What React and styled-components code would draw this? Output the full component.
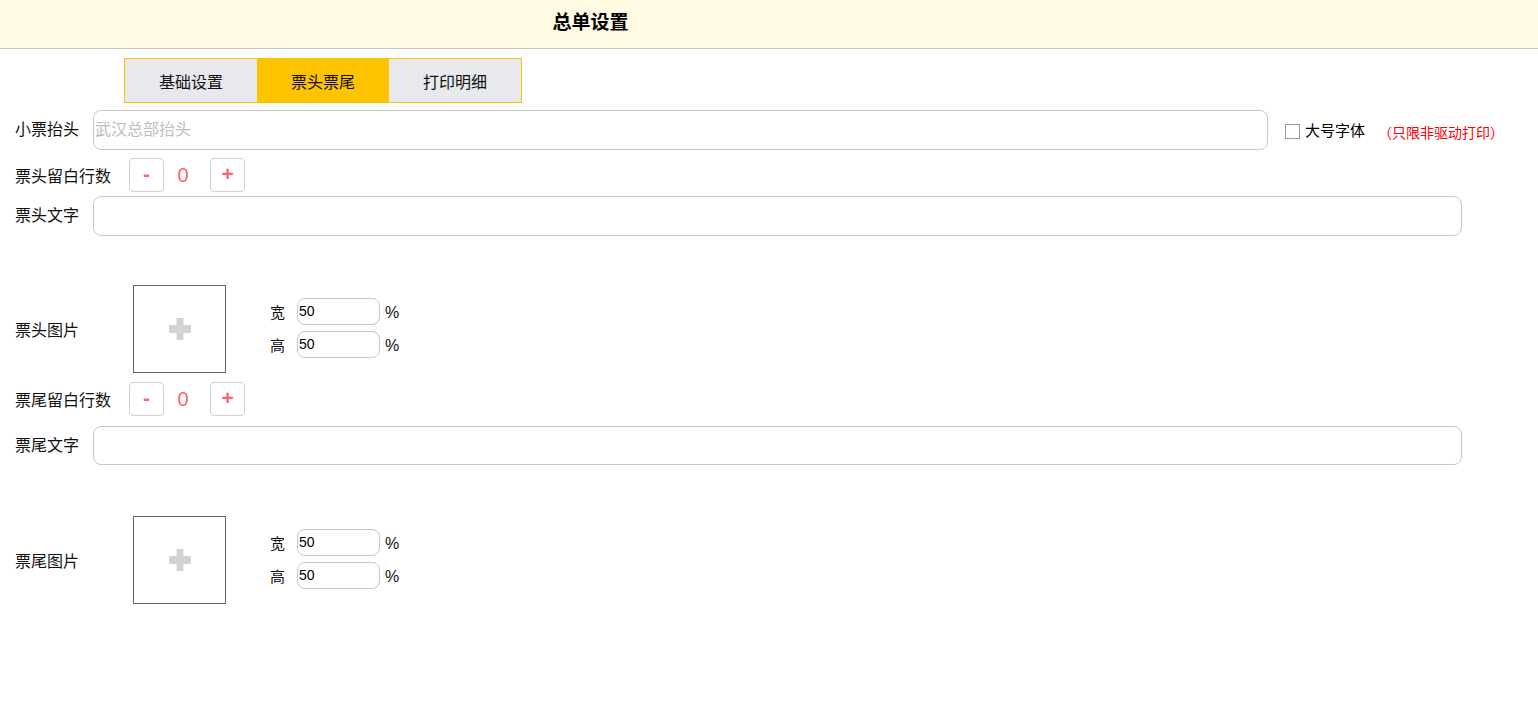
import React, { useState } from "react";
import styled, { createGlobalStyle } from "styled-components";

const GlobalStyle = createGlobalStyle`
	* { box-sizing: border-box; }
	body {
		margin: 0;
		background: #fff;
		font-family: "Liberation Sans", "Noto Sans CJK SC", sans-serif;
		color: #111;
	}
`;

const tabs = ["基础设置", "票头票尾", "打印明细"];

const PlusIcon = () => (
	<svg width="22" height="22" viewBox="0 0 22 22">
		<rect x="7.5" y="0" width="7" height="22" fill="#d3d3d3" />
		<rect x="0" y="7" width="22" height="8" fill="#d3d3d3" />
	</svg>
);

const Stepper = ({ label, top }) => {
	const [count, setCount] = useState(0);
	return (
		<Row top={top} height={34}>
			<StepLabel>{label}</StepLabel>
			<StepBtn onClick={() => setCount(Math.max(0, count - 1))}>-</StepBtn>
			<Count>{count}</Count>
			<StepBtn onClick={() => setCount(count + 1)}>+</StepBtn>
		</Row>
	);
};

const PictureRow = ({ label, top }) => (
	<Row top={top} height={88}>
		<PicLabel>{label}</PicLabel>
		<PicBox>
			<PlusIcon />
		</PicBox>
		<SizeCol>
			<SizeLine>
				<SizeName>宽</SizeName>
				<SizeInput defaultValue="50" />
				<Percent>%</Percent>
			</SizeLine>
			<SizeLine>
				<SizeName>高</SizeName>
				<SizeInput defaultValue="50" />
				<Percent>%</Percent>
			</SizeLine>
		</SizeCol>
	</Row>
);

const App = () => {
	const [active, setActive] = useState(1);
	return (
		<>
			<GlobalStyle />
			<Header>
				<Title>总单设置</Title>
			</Header>
			<Tabs>
				{tabs.map((t, i) => (
					<Tab key={t} isActive={i === active} onClick={() => setActive(i)}>
						{t}
					</Tab>
				))}
			</Tabs>
			<Form>
				<Row top={7} height={40}>
					<Label>小票抬头</Label>
					<TextInput width={1175} placeholder="武汉总部抬头" />
					<CheckWrap>
						<CheckBox type="checkbox" />
						<CheckText>大号字体</CheckText>
					</CheckWrap>
					<Note>（只限非驱动打印）</Note>
				</Row>
				<Stepper label="票头留白行数" top={8} />
				<Row top={4} height={40}>
					<Label>票头文字</Label>
					<TextInput width={1369} />
				</Row>
				<PictureRow label="票头图片" top={49} />
				<Stepper label="票尾留白行数" top={9} />
				<Row top={10} height={39}>
					<Label>票尾文字</Label>
					<TextInput width={1369} />
				</Row>
				<PictureRow label="票尾图片" top={51} />
			</Form>
		</>
	);
};

const Header = styled.div`
	height: 49px;
	background-color: #fffae1;
	border-bottom: 1px solid #c8c8c8;
`;

const Title = styled.h1`
	margin: 0;
	width: 1181px;
	text-align: center;
	font-size: 19px;
	font-weight: bold;
	line-height: 46px;
	color: #000;
`;

const Tabs = styled.div`
	display: flex;
	margin: 9px 0 0 124px;
	width: 398px;
	height: 45px;
	border: 1px solid #f5c200;
`;

const Tab = styled.div`
	flex: 1;
	display: flex;
	align-items: center;
	justify-content: center;
	font-size: 16px;
	color: #111;
	cursor: pointer;
	background-color: ${(p) => (p.isActive ? "#ffc300" : "#e8e9ee")};
`;

const Form = styled.div`
	padding-left: 15px;
`;

const Row = styled.div`
	display: flex;
	align-items: center;
	margin-top: ${(p) => p.top}px;
	height: ${(p) => p.height}px;
`;

const Label = styled.div`
	width: 78px;
	flex-shrink: 0;
	font-size: 16px;
	line-height: 20px;
`;

const TextInput = styled.input`
	width: ${(p) => p.width}px;
	height: 100%;
	border: 1px solid #c8c8c8;
	border-radius: 8px;
	padding: 0 1px;
	font-size: 16px;
	font-family: "Liberation Sans", "Noto Sans CJK SC", sans-serif;
	outline: none;
	&::placeholder {
		color: #bdbdbd;
	}
`;

const CheckWrap = styled.label`
	display: flex;
	align-items: center;
	margin-left: 17px;
	margin-top: 2px;
`;

const CheckBox = styled.input`
	appearance: none;
	margin: 0;
	width: 15px;
	height: 15px;
	border: 1px solid #999;
	background: #fff;
`;

const CheckText = styled.span`
	margin-left: 5px;
	margin-top: -4px;
	font-size: 15px;
	color: #000;
`;

const Note = styled.span`
	margin-left: 13px;
	margin-top: 4px;
	font-size: 14px;
	color: #ff0000;
`;

const StepLabel = styled.div`
	font-size: 16px;
	line-height: 20px;
	margin-top: 3px;
	margin-right: 18px;
`;

const StepBtn = styled.button`
	width: 35px;
	height: 34px;
	border: 1px solid #cfcfcf;
	border-radius: 4px;
	background: #fff;
	color: #ff6666;
	font-size: 21px;
	font-weight: bold;
	font-family: "Liberation Sans", sans-serif;
	padding: 0 0 2px;
	cursor: pointer;
`;

const Count = styled.span`
	width: 38px;
	margin-right: 8px;
	text-align: center;
	font-size: 20px;
	color: #ff6666;
`;

const PicLabel = styled.div`
	width: 118px;
	font-size: 16px;
	line-height: 20px;
	margin-top: 4px;
`;

const PicBox = styled.div`
	width: 93px;
	height: 88px;
	border: 1px solid #666;
	display: flex;
	align-items: center;
	justify-content: center;
	cursor: pointer;
`;

const SizeCol = styled.div`
	display: flex;
	flex-direction: column;
	gap: 6px;
	margin-left: 44px;
	margin-top: -3px;
`;

const SizeLine = styled.div`
	display: flex;
	align-items: center;
`;

const SizeName = styled.span`
	font-size: 15px;
	width: 27px;
`;

const SizeInput = styled.input`
	width: 83px;
	height: 27px;
	border: 1px solid #c8c8c8;
	border-radius: 8px;
	padding: 0 1px;
	font-size: 14px;
	font-family: "Liberation Sans", sans-serif;
	outline: none;
`;

const Percent = styled.span`
	margin-left: 5px;
	font-size: 16px;
	margin-top: 3px;
`;

export default App;
